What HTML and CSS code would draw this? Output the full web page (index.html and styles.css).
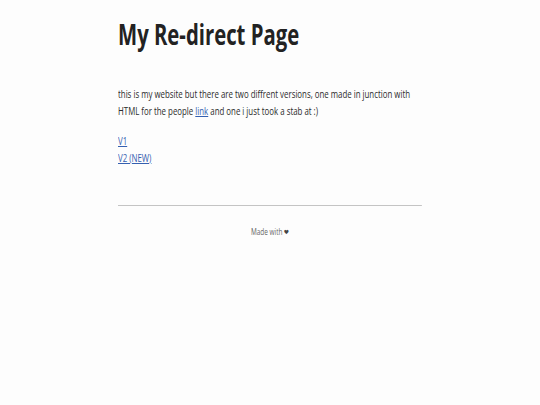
FILE: index.html
```html
<!DOCTYPE html>
<html lang="en">
<head>
<meta charset="utf-8">
<title>My Re-direct Page</title>
<link rel="stylesheet" href="styles.css">
</head>
<body>
<div class="page">
  <main class="content">
    <h1 class="title">My Re-direct Page</h1>
    <p class="intro">this is my website but there are two diffrent versions, one made in junction with HTML for the people <a href="#">link</a> and one i just took a stab at :)</p>
    <p class="versions"><a href="#">V1</a><br><a href="#">V2 (NEW)</a></p>
  </main>
  <hr class="rule">
  <footer class="footer">Made with <span class="heart">&#x2764;</span></footer>
</div>
</body>
</html>
```
FILE: styles.css
```css
html, body {
  margin: 0;
  padding: 0;
  background: #fdfdfd;
}
body {
  font-family: "Open Sans", sans-serif;
  color: #2b2b2b;
}
.page {
  width: 425px;
  margin-left: 118px;
  transform: scaleX(0.715);
  transform-origin: left top;
}
.content {
  padding-top: 15px;
}
.title {
  margin: 0;
  font-size: 28.4px;
  font-weight: 700;
  line-height: 38px;
  color: #222;
}
.intro, .versions {
  font-size: 11px;
  line-height: 16.5px;
  margin: 0;
}
.intro {
  margin-top: 33px;
}
.versions {
  margin-top: 14px;
}
a {
  color: #3560b0;
  text-decoration: underline;
}
.rule {
  margin: 39px 0 0;
  border: 0;
  height: 1px;
  background: #c4c4c4;
}
.footer {
  margin-top: 19px;
  text-align: center;
  font-size: 9px;
  color: #666;
}
.heart {
  font-family: "DejaVu Sans", sans-serif;
  font-size: 8px;
  color: #444;
}
```
